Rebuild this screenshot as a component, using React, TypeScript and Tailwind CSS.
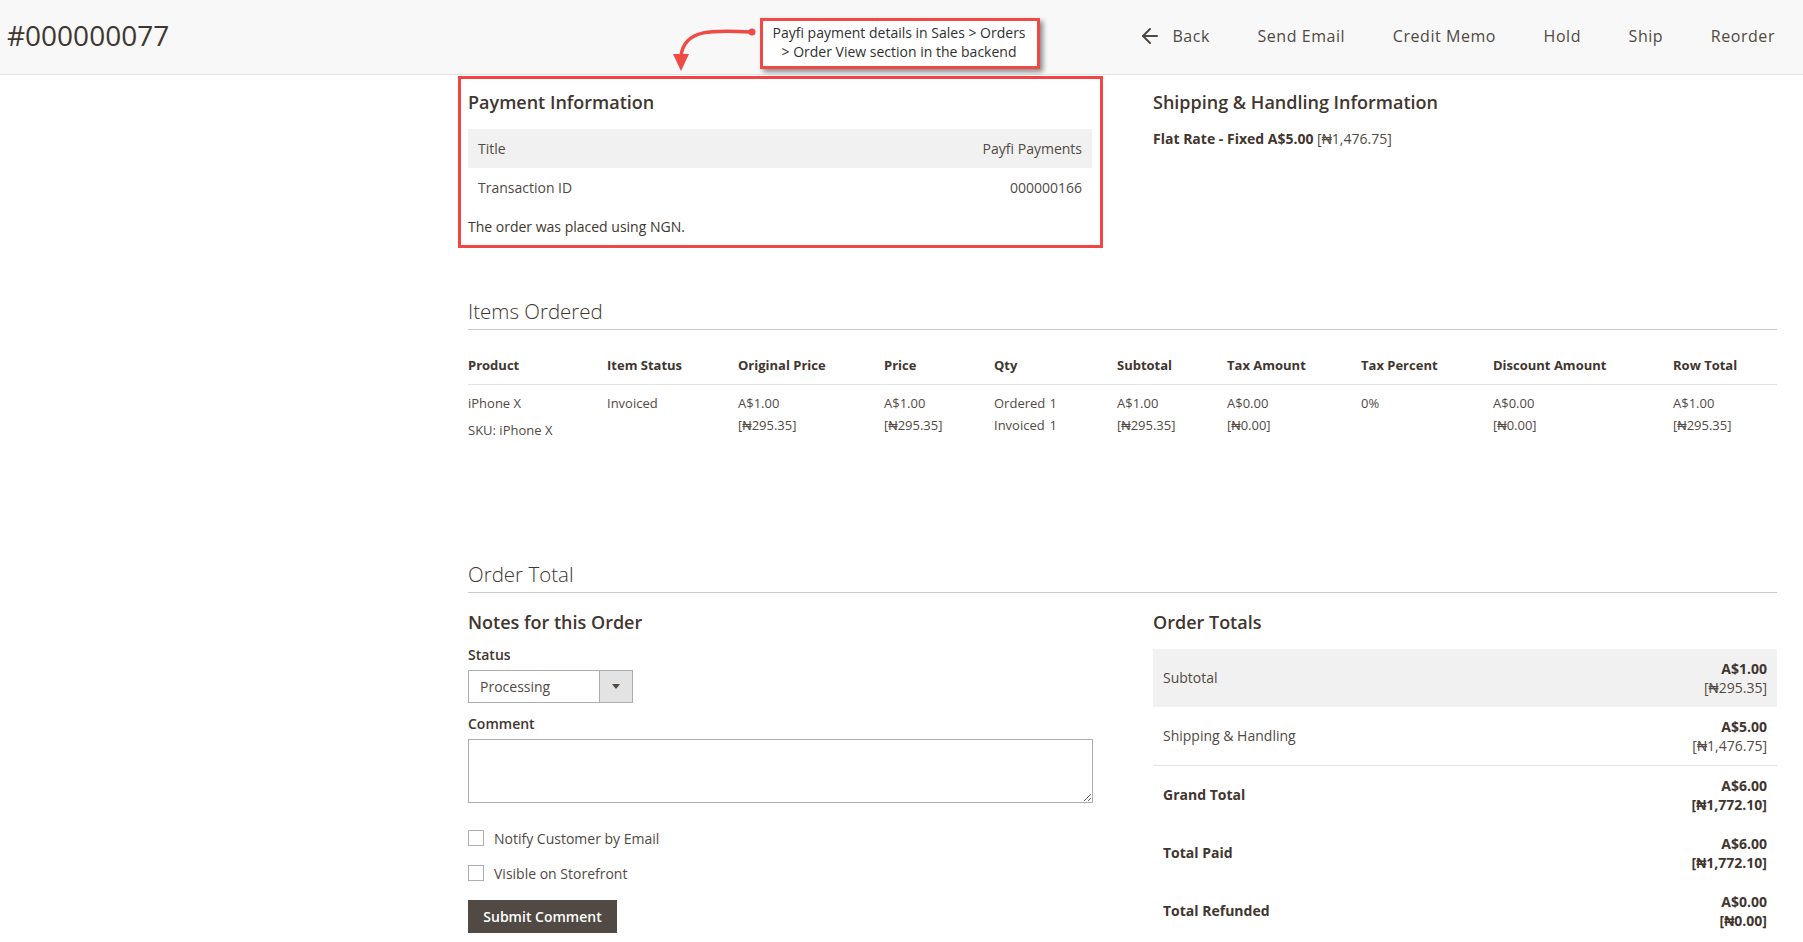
import { ArrowLeft } from "lucide-react";

const tableCols =
  "grid grid-cols-[139px_131px_146px_110px_123px_110px_134px_132px_180px_1fr]";

const naira = "\u20A6";

const actions = ["Send Email", "Credit Memo", "Hold", "Ship", "Reorder"];

const totals = [
  { label: "Subtotal", main: "A$1.00", sub: "295.35", strong: false, cls: "bg-[#f1f1f1]" },
  { label: "Shipping & Handling", main: "A$5.00", sub: "1,476.75", strong: false, cls: "border-b border-[#e3e3e3] h-[59px]" },
  { label: "Grand Total", main: "A$6.00", sub: "1,772.10", strong: true, cls: "" },
  { label: "Total Paid", main: "A$6.00", sub: "1,772.10", strong: true, cls: "" },
  { label: "Total Refunded", main: "A$0.00", sub: "0.00", strong: true, cls: "" },
];

function Header() {
  return (
    <header className="relative flex h-[75px] items-center justify-between border-b border-[#e3e3e3] bg-[#f8f8f8] pb-[3px] pl-[7px] pr-[28px]">
      <h1 className="mb-[2px] text-[28px] font-normal leading-none text-[#41362f]">#000000077</h1>

      {/* annotation drawn over the page */}
      <svg className="absolute left-[665px] top-[20px]" width="95" height="55" viewBox="665 20 95 55">
        <path d="M752 32 C 715 30, 684 28, 681 56" fill="none" stroke="#f04a44" strokeWidth="3.5" />
        <circle cx="752" cy="32" r="3.5" fill="#f04a44" />
        <polygon points="673,54 689,54 681,71" fill="#f04a44" />
      </svg>
      <div className="absolute left-[760px] top-[18px] flex h-[51px] w-[280px] flex-col items-center border-[3px] border-[#f04a44] bg-white pr-[2px] pt-[2px] text-[14px] leading-[19px] text-[#303030] shadow-[3px_3px_5px_rgba(0,0,0,0.45)]">
        <span>Payfi payment details in Sales &gt; Orders</span>
        <span>&gt; Order View section in the backend</span>
      </div>

      <nav className="flex items-center gap-[47.6px] text-[16px] font-medium tracking-[0.55px] text-[#514943]">
        <button className="flex items-center gap-[10px]">
          <ArrowLeft size={24} strokeWidth={2} />
          <span>Back</span>
        </button>
        {actions.map((a) => (
          <button key={a}>{a}</button>
        ))}
      </nav>
    </header>
  );
}

function PaymentInfo() {
  return (
    <section className="-ml-[10px] mt-px flex h-[172px] w-[645px] flex-col border-[3px] border-[#f44444] pl-[7px] pr-[8px]">
      <h2 className="mt-[11px] text-[18px] font-semibold leading-[24px]">Payment Information</h2>
      <div className="mt-[15px] flex h-[39px] items-center justify-between bg-[#f1f1f1] px-[10px] text-[#514943]">
        <span>Title</span>
        <span>Payfi Payments</span>
      </div>
      <div className="flex h-[39px] items-center justify-between px-[10px] text-[#514943]">
        <span>Transaction ID</span>
        <span>000000166</span>
      </div>
      <p className="mt-[10px] leading-[20px]">The order was placed using NGN.</p>
    </section>
  );
}

function Cell({ top, bottom }: { top: string; bottom?: string }) {
  return (
    <div className="leading-[22px]">
      <div>{top}</div>
      {bottom && <div>{bottom}</div>}
    </div>
  );
}

function Qty({ label }: { label: string }) {
  return (
    <div className="flex w-[63px] justify-between leading-[22px]">
      <span>{label}</span>
      <span>1</span>
    </div>
  );
}

function ItemsTable() {
  const heads = [
    "Product",
    "Item Status",
    "Original Price",
    "Price",
    "Qty",
    "Subtotal",
    "Tax Amount",
    "Tax Percent",
    "Discount Amount",
    "Row Total",
  ];
  return (
    <div className="text-[13px]">
      <div className={`${tableCols} h-[55px] items-end border-b border-[#e3e3e3] pb-[9px] font-bold text-[#41362f]`}>
        {heads.map((h) => (
          <div key={h}>{h}</div>
        ))}
      </div>
      <div className={`${tableCols} pt-[7px] text-[#514943]`}>
        <div>
          <div className="leading-[22px]">iPhone X</div>
          <div className="mt-[5px] leading-[22px]">SKU: iPhone X</div>
        </div>
        <Cell top="Invoiced" />
        <Cell top="A$1.00" bottom={`[${naira}295.35]`} />
        <Cell top="A$1.00" bottom={`[${naira}295.35]`} />
        <div>
          <Qty label="Ordered" />
          <Qty label="Invoiced" />
        </div>
        <Cell top="A$1.00" bottom={`[${naira}295.35]`} />
        <Cell top="A$0.00" bottom={`[${naira}0.00]`} />
        <Cell top="0%" />
        <Cell top="A$0.00" bottom={`[${naira}0.00]`} />
        <Cell top="A$1.00" bottom={`[${naira}295.35]`} />
      </div>
    </div>
  );
}

function Notes() {
  return (
    <div className="w-[625px]">
      <h2 className="text-[18px] font-semibold leading-[24px]">Notes for this Order</h2>
      <label className="mt-[11px] block font-semibold leading-[20px]">Status</label>
      <div className="mt-[5px] flex h-[33px] w-[165px] border border-[#adadad] text-[#514943]">
        <span className="flex flex-1 items-center pl-[11px]">Processing</span>
        <span className="flex w-[33px] items-center justify-center border-l border-[#adadad] bg-[#e3e3e3]">
          <span className="h-0 w-0 border-x-[4px] border-t-[5px] border-x-transparent border-t-[#514943]" />
        </span>
      </div>
      <label className="mt-[11px] block font-semibold leading-[20px]">Comment</label>
      <textarea className="mt-[5px] block h-[64px] w-[625px] border border-[#adadad] bg-white outline-none" />
      <label className="mt-[27px] flex h-[16px] items-center gap-[10px] text-[#514943]">
        <span className="h-[16px] w-[16px] border border-[#adadad] bg-white" />
        Notify Customer by Email
      </label>
      <label className="mt-[19px] flex h-[16px] items-center gap-[10px] text-[#514943]">
        <span className="h-[16px] w-[16px] border border-[#adadad] bg-white" />
        Visible on Storefront
      </label>
      <button className="mt-[19px] h-[33px] w-[149px] bg-[#514943] font-semibold text-white">Submit Comment</button>
    </div>
  );
}

function Totals() {
  return (
    <div>
      <h2 className="text-[18px] font-semibold leading-[24px]">Order Totals</h2>
      <div className="mt-[15px]">
        {totals.map((t) => (
          <div key={t.label} className={`flex h-[58px] items-center justify-between px-[10px] ${t.cls}`}>
            <span className={`mb-[2px] ${t.strong ? "font-bold text-[#41362f]" : "text-[#514943]"}`}>{t.label}</span>
            <div className="text-right leading-[19.5px]">
              <div className="font-bold text-[#41362f]">{t.main}</div>
              <div className={t.strong ? "font-bold text-[#41362f]" : "text-[#514943]"}>
                [{naira}
                {t.sub}]
              </div>
            </div>
          </div>
        ))}
      </div>
    </div>
  );
}

export default function App() {
  return (
    <div className="h-[942px] overflow-hidden bg-white font-['Open_Sans',sans-serif] text-[14px] text-[#41362f]">
      <Header />
      <main className="pl-[468px] pr-[26px]">
        <div className="grid grid-cols-[685px_1fr]">
          <PaymentInfo />
          <div className="pt-[15px]">
            <h2 className="text-[18px] font-semibold leading-[24px]">Shipping &amp; Handling Information</h2>
            <p className="mt-[15px] leading-[20px]">
              <span className="font-bold">Flat Rate - Fixed A$5.00</span>{" "}
              <span className="text-[#514943]">[{naira}1,476.75]</span>
            </p>
          </div>
        </div>

        <h2 className="mt-[48px] h-[34px] border-b border-[#cccccc] text-[20.5px] font-light leading-[30px]">Items Ordered</h2>
        <ItemsTable />

        <h2 className="mt-[119px] h-[33px] border-b border-[#cccccc] text-[20.5px] font-light leading-[28px]">Order Total</h2>
        <div className="mt-[17px] grid grid-cols-[685px_1fr]">
          <Notes />
          <Totals />
        </div>
      </main>
    </div>
  );
}
